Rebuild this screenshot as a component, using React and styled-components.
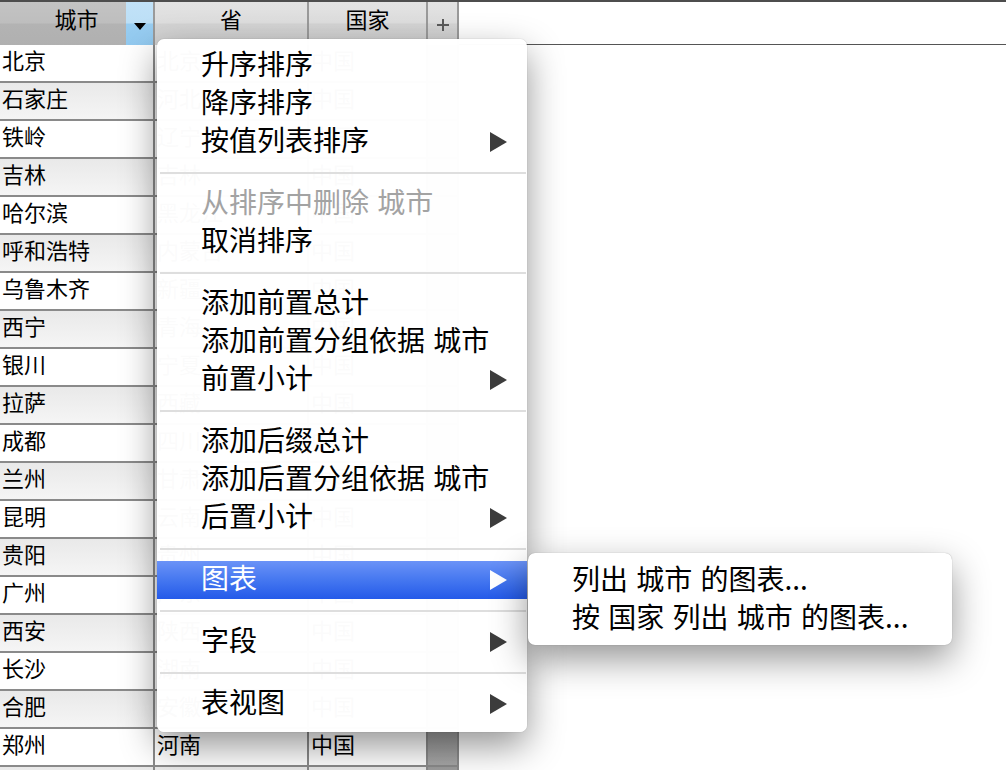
import React from "react";
import styled, { createGlobalStyle } from "styled-components";

const GlobalStyle = createGlobalStyle`
  html, body {
    margin: 0;
    padding: 0;
    background: #ffffff;
    overflow: hidden;
  }
  body {
    font-family: "Noto Sans CJK SC", "Noto Sans", sans-serif;
    color: #000;
  }
`;

const Page = styled.div`
  position: relative;
  width: 1006px;
  height: 770px;
  overflow: hidden;
  box-sizing: border-box;
  border-top: 2px solid #4d4d4d;
  background: #fff;
`;

const HeaderStrip = styled.div`
  display: flex;
  height: 43px;
`;

const ColumnsGrid = styled.div`
  display: grid;
  grid-template-columns: 155px 154px 119px 31px;
  width: 459px;
`;

const HeaderCell = styled.div`
  position: relative;
  box-sizing: border-box;
  height: 43px;
  border-right: 2px solid #9a9a9a;
  background: ${(p) =>
    p.$selected
      ? "linear-gradient(#c3c3c3 0%, #bebebe 48%, #b3b3b3 52%, #b0b0b0 100%)"
      : "linear-gradient(#e2e2e2 0%, #dedede 48%, #d4d4d4 52%, #d0d0d0 100%)"};
  display: flex;
  justify-content: center;
  align-items: flex-start;
  padding-top: 2px;
  font-size: 22px;
  line-height: 28px;
`;

const DropButton = styled.div`
  position: absolute;
  right: 0;
  top: 0;
  width: 27px;
  height: 43px;
  background: linear-gradient(#c2e2f8 0%, #bcdff6 48%, #98cdf1 52%, #92c9ef 100%);
  display: flex;
  align-items: center;
  justify-content: center;
  padding-top: 5px;
  box-sizing: border-box;
`;

const Filler = styled.div`
  flex: 1;
  box-sizing: border-box;
  border-bottom: 1px solid #555;
`;

const Row = styled(ColumnsGrid)`
  height: 38px;
  box-sizing: border-box;
  border-bottom: 2px solid #8a8a8a;
  background: ${(p) =>
    p.$shaded ? "linear-gradient(#e9e9e9, #f5f5f5)" : "#ffffff"};
`;

const Cell = styled.div`
  box-sizing: border-box;
  border-right: 2px solid #8a8a8a;
  padding: 0 0 0 2px;
  font-size: 22px;
  line-height: 28px;
  white-space: nowrap;
`;

const GrayCell = styled.div`
  box-sizing: border-box;
  border-right: 2px solid #8a8a8a;
  background: linear-gradient(#9c9c9c, #a6a6a6);
`;

const Menu = styled.div`
  position: absolute;
  left: 157px;
  top: 37px;
  width: 370px;
  box-sizing: border-box;
  padding: 8px 0 9px;
  background: rgba(255, 255, 255, 0.985);
  border-radius: 7px;
  box-shadow: 0 14px 36px rgba(0, 0, 0, 0.42), 0 0 1px rgba(0, 0, 0, 0.35);
`;

const SubMenu = styled(Menu)`
  left: 528px;
  top: 551px;
  width: 424px;
  padding: 9px 0 7px;
  background: #fff;
`;

const Item = styled.div`
  height: 38px;
  box-sizing: border-box;
  display: flex;
  align-items: center;
  justify-content: space-between;
  padding: 0 20px 0 44px;
  font-size: 28px;
  line-height: 38px;
  white-space: nowrap;
  color: ${(p) => (p.$disabled ? "#a3a3a3" : p.$active ? "#fff" : "#000")};
  background: ${(p) =>
    p.$active ? "linear-gradient(#6b93f7 0%, #4577f0 50%, #245ae9 100%)" : "transparent"};
`;

const ItemLabel = styled.span`
  word-spacing: 2px;
  position: relative;
  top: -3px;
`;

const Arrow = styled.span`
  width: 0;
  height: 0;
  border-top: 10.5px solid transparent;
  border-bottom: 10.5px solid transparent;
  border-left: 17px solid ${(p) => (p.$active ? "#ffffff" : "#3c3c3c")};
`;

const Separator = styled.div`
  height: 24px;
  display: flex;
  align-items: center;
  &::after {
    content: "";
    flex: 1;
    height: 2px;
    margin: 0 1px 0 3px;
    background: #dedede;
  }
`;

const DownTriangle = () => (
  <svg width="12" height="7" viewBox="0 0 12 7">
    <polygon points="0,0 12,0 6,7" fill="#000" />
  </svg>
);

const PlusIcon = () => (
  <svg width="12" height="12" viewBox="0 0 12 12">
    <rect x="5" y="0" width="2" height="12" fill="#5a5a5a" />
    <rect x="0" y="5" width="12" height="2" fill="#5a5a5a" />
  </svg>
);

const PlusCell = styled(HeaderCell)`
  align-items: center;
  padding-top: 3px;
`;

const rows = [
  ["北京", "北京", "中国"],
  ["石家庄", "河北", "中国"],
  ["铁岭", "辽宁", "中国"],
  ["吉林", "吉林", "中国"],
  ["哈尔滨", "黑龙江", "中国"],
  ["呼和浩特", "内蒙古", "中国"],
  ["乌鲁木齐", "新疆", "中国"],
  ["西宁", "青海", "中国"],
  ["银川", "宁夏", "中国"],
  ["拉萨", "西藏", "中国"],
  ["成都", "四川", "中国"],
  ["兰州", "甘肃", "中国"],
  ["昆明", "云南", "中国"],
  ["贵阳", "贵州", "中国"],
  ["广州", "广东", "中国"],
  ["西安", "陕西", "中国"],
  ["长沙", "湖南", "中国"],
  ["合肥", "安徽", "中国"],
  ["郑州", "河南", "中国"],
  ["", "", ""],
];

const menu = [
  [
    { label: "升序排序" },
    { label: "降序排序" },
    { label: "按值列表排序", sub: true },
  ],
  [
    { label: "从排序中删除 城市", disabled: true },
    { label: "取消排序" },
  ],
  [
    { label: "添加前置总计" },
    { label: "添加前置分组依据 城市" },
    { label: "前置小计", sub: true },
  ],
  [
    { label: "添加后缀总计" },
    { label: "添加后置分组依据 城市" },
    { label: "后置小计", sub: true },
  ],
  [{ label: "图表", sub: true, active: true }],
  [{ label: "字段", sub: true }],
  [{ label: "表视图", sub: true }],
];

export default function App() {
  return (
    <>
      <GlobalStyle />
      <Page>
        <HeaderStrip>
          <ColumnsGrid>
            <HeaderCell $selected>
              城市
              <DropButton>
                <DownTriangle />
              </DropButton>
            </HeaderCell>
            <HeaderCell>省</HeaderCell>
            <HeaderCell>国家</HeaderCell>
            <PlusCell>
              <PlusIcon />
            </PlusCell>
          </ColumnsGrid>
          <Filler />
        </HeaderStrip>
        {rows.map((r, i) => (
          <Row key={i} $shaded={i % 2 === 1}>
            <Cell>{r[0]}</Cell>
            <Cell>{r[1]}</Cell>
            <Cell>{r[2]}</Cell>
            <GrayCell />
          </Row>
        ))}

        <Menu>
          {menu.map((group, gi) => (
            <React.Fragment key={gi}>
              {gi > 0 && <Separator />}
              {group.map((it) => (
                <Item key={it.label} $disabled={it.disabled} $active={it.active}>
                  <ItemLabel>{it.label}</ItemLabel>
                  {it.sub && <Arrow $active={it.active} />}
                </Item>
              ))}
            </React.Fragment>
          ))}
        </Menu>

        <SubMenu>
          <Item>
            <ItemLabel>列出 城市 的图表...</ItemLabel>
          </Item>
          <Item>
            <ItemLabel>按 国家 列出 城市 的图表...</ItemLabel>
          </Item>
        </SubMenu>
      </Page>
    </>
  );
}
